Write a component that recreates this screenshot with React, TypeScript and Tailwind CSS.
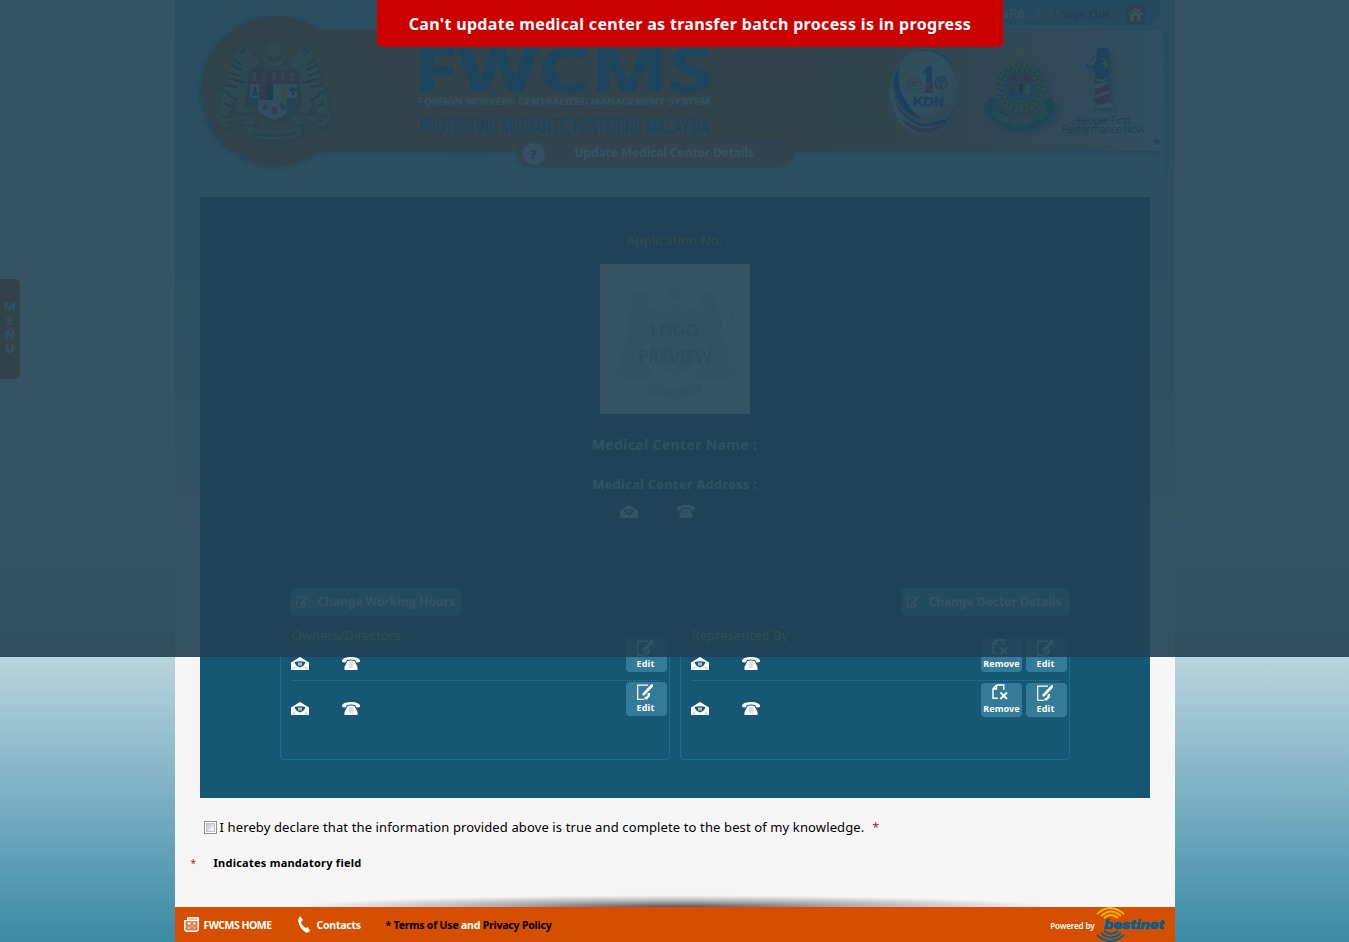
import React from "react";

function MailIcon() {
  return (
    <svg width="18" height="13" viewBox="0 0 18 13" className="block">
      <path d="M0 5.500 9 0l9 5.500V13H0z" fill="#fff" />
      <path d="M3.500 5Q9 3.500 14.500 5Q13.500 9 9 10.500Q4.500 9 3.500 5z" fill="#165873" />
      <rect x="7" y="5.500" width="4" height="3" fill="#a9c4d1" />
      <path d="M1 12.500 4.500 9.800M17 12.500 13.500 9.800" stroke="#8fb3c4" strokeWidth=".8" />
    </svg>
  );
}

function PhoneIcon() {
  return (
    <svg width="18" height="13" viewBox="0 0 18 13" className="block">
      <path d="M0 3.500Q1 0 9 0T18 3.500V5l-3.500.5L13 3Q9 2 5 3L3.500 5.500 0 5z" fill="#fff" />
      <path d="M5.500 4q3.500-1 7 0l3 6V13h-13v-3z" fill="#fff" />
      <path d="M6.500 6h5M6.500 8h5M6.500 10h5M8 5.500v5M10 5.500v5" stroke="#a9c4d1" strokeWidth=".6" />
    </svg>
  );
}

function EditIcon({ size = 16 }: { size?: number }) {
  return (
    <svg width={size} height={size} viewBox="0 0 16 16" className="block">
      <path d="M11 1.100H.7v14.200H7" stroke="#fff" strokeWidth="1.200" fill="none" />
      <path d="M16 0v2.500L9.900 9 7.300 11.500H5.500V9.500L14 .5z" fill="#fff" />
      <path d="M11 9h2v3.300L9.500 15.700 7.500 15V13l2.500-.5z" fill="#fff" />
    </svg>
  );
}

function RemoveIcon() {
  return (
    <svg width="16" height="16" viewBox="0 0 16 16" className="block">
      <path d="M4.500 1h7.300v5M4.500 1 1 4.800v9.500H6M4.500 1v4H1" stroke="#fff" strokeWidth="1.400" fill="none" />
      <path d="m8.500 8.500 6.500 6.500m0-6.500-6.500 6.500" stroke="#fff" strokeWidth="2" />
    </svg>
  );
}

function Tiger() {
  return (
    <g>
      <path d="M-20-32Q-25-45-34-43Q-41-39-38-29Q-48-20-46-6Q-55 3-53 14Q-55 22-58 26L-45 25Q-42 14-37 7L-38 14Q-38 21-31 24L-23 20-29 15-29 6Q-24-4-27-17L-17-24-14-30-20-33-28-26z" fill="#b8a054" />
      <path d="m-40-30 8 5m-11 0 10 5m-13 2 12 4m-13 2 13 3m-15 4 13 2m-16 4 9 3M-35-40l4 4m-1-7 3 5m-17 43 9 5m-13 3 8 4m4-26 10 2" stroke="#302b20" strokeWidth="2" />
      <path d="M-50 3Q-60 0-57-11Q-53-19-57-26" fill="none" stroke="#8b6740" strokeWidth="3" strokeDasharray="3 1" />
    </g>
  );
}

function Crest() {
  return (
    <g>
      <path d="M-12-38Q-11-24 0-24T12-38Q8-28 0-28T-12-38" fill="#c1a51b" />
      <path d="m0-48 2 6 5-4-1 6 6-1-4 5 5 3-6 2 2 5-6-2-3 5-3-5-6 2 2-5-6-2 5-3-4-5 6 1-1-6 5 4z" fill="#c7ad1b" transform="translate(0 -15) scale(.7)" />
      <Tiger />
      <g transform="scale(-1 1)"><Tiger /></g>
      <path d="M-24-20H23V5Q21 23 0 30Q-21 23-24 5z" fill="#ddd" />
      <path d="M-24-20H23V-6H-24z" fill="#b32035" />
      <path d="M-19-17v8m9-8v8m10-8v8m9-8v8m9-8v8" stroke="#b9a51b" strokeWidth="3" strokeDasharray="4 1" />
      <path d="M-15-6h7V10h-7z" fill="#a82032" /><path d="M-8-6h7V10h-7z" fill="#191919" />
      <path d="M7-6h7V10H7z" fill="#d8c331" />
      <path d="M14 8h9Q21 21 12 25V10z" fill="#23795c" />
      <path d="M-19-3v7m-3 0h6M19-3v8m-4-5h8" stroke="#254b30" strokeWidth="3" />
      <path d="M-24 8h8v12q-7-4-8-12" fill="#296792" />
      <path d="m-12 19h6l-3-5zM8 12l4 5-3 4-4-6zM-3 17h6v7h-4z" fill="#9d2849" />
      <path d="m-60 24 14 5 16-4 12 2-3 8-17-2-13 4zM60 24l-14 5-16-4-12 2 3 8 17-2 13 4zM-27 36Q0 45 27 36V46Q0 53-27 46z" fill="#a69a2f" />
      <path d="M-49 32q9 1 22-2M29 30q12 3 20 1M-22 43q22 5 44 0" stroke="#514b18" strokeWidth="3" strokeDasharray="2 1" fill="none" />
    </g>
  );
}

function CrestWatermark() {
  return (
    <svg className="absolute inset-0" width="150" height="150" viewBox="-75 -75 150 150">
      <g fill="#e2e7e9">
        <circle cx="0" cy="-46" r="7" />
        <path d="M-13-43Q-12-28 0-28T13-43Q9-33 0-33T-13-43" />
        {[1, -1].map((side) => (
          <g key={side} transform={`scale(${side} 1)`}>
            <path d="M-26-43-34-50-42-44-41-34Q-50-20-46-3-56 10-53 26L-62 30-50 44-38 39-20 40-25 28-32 20-31 8-22-4V-20L-10-25-20-32-29-27z" />
            <path d="M-52 3Q-66 0-60-14-53-22-60-32" fill="none" stroke="#e2e7e9" strokeWidth="2" />
          </g>
        ))}
        <path d="M-26-25H26V8Q22 30 0 36-22 30-26 8zM-27 44Q0 52 27 44V55Q0 63-27 55z" />
      </g>
    </svg>
  );
}

function BannerArt() {
  return (
    <svg width="1000" height="197" viewBox="175 0 1000 197" className="absolute inset-0">
      <defs>
        <linearGradient id="bar"><stop offset="0" stopColor="#cf6800" /><stop offset=".58" stopColor="#cf6800" /><stop offset=".78" stopColor="#cc8058" /><stop offset=".92" stopColor="#c8a8a4" /><stop offset="1" stopColor="#ccdce8" /></linearGradient>
        <linearGradient id="oval" x1="0" y1="0" x2="1" y2="1"><stop offset="0" stopColor="#b9ae65" /><stop offset=".5" stopColor="#bfd8d6" /><stop offset="1" stopColor="#b7693f" /></linearGradient>
        <filter id="shade" colorInterpolationFilters="sRGB"><feDropShadow dx="-2" dy="1" stdDeviation="2.500" floodColor="#003d72" floodOpacity=".6" /></filter>
        <filter id="soft" colorInterpolationFilters="sRGB"><feDropShadow dx="3" dy="3" stdDeviation="3" floodColor="#003050" floodOpacity=".6" /></filter>
      </defs>
      <path d="M1000 0h160v13q0 12-12 12H1000z" fill="#4f9fb8" />
      <path d="M1165 30q2 5 2 18v125" stroke="#5a9fb4" strokeWidth="3" fill="none" opacity=".5" />
      <g filter="url(#shade)"><circle cx="277" cy="91" r="75" fill="#cf6800" /><path d="M280 30H1162V151H280z" fill="url(#bar)" /></g>
      <g transform="translate(274 90)" opacity=".9" filter="url(#soft)"><Crest /></g>
      <g fill="#0e6aac">
        <text x="413" y="92" stroke="#0e6aac" strokeWidth="1" fontFamily="Open Sans, sans-serif" fontSize="61" fontWeight="700" textLength="300" lengthAdjust="spacingAndGlyphs">FWCMS</text>
        <text x="419" y="134" fontFamily="Roboto, sans-serif" fontSize="22" fontWeight="700" textLength="290" lengthAdjust="spacingAndGlyphs">PROTECTING MIGRANTS, FOSTERING MALAYSIA</text>
      </g>
      <text x="418" y="105" fill="#c8e6f2" fontFamily="Inter, sans-serif" fontSize="9" fontWeight="600" textLength="292" lengthAdjust="spacingAndGlyphs">FOREIGN WORKERS CENTRALIZED MANAGEMENT SYSTEM</text>

      <ellipse cx="924" cy="92" rx="34" ry="43" fill="url(#oval)" stroke="#6caaba" />
      <path d="M915 51Q949 43 957 80 962 110 940 128 967 99 954 70 943 48 915 51" fill="#1d5d77" />
      <path d="M901 62Q887 84 899 110Q921 139 951 118Q924 128 909 106Q893 83 901 62" fill="#0838c9" />
      <path d="M895 72Q890 97 908 113Q928 126 952 106Q926 138 902 112Q888 92 895 72" fill="#d88a3a" />
      <path d="M900 118q24 18 48 4-25 24-48-4" fill="#b02230" />
      <text x="913" y="106" fill="#093ec4" stroke="#093ec4" strokeWidth=".5" fontFamily="Liberation Sans, sans-serif" fontSize="13.500" fontWeight="900" textLength="31" lengthAdjust="spacingAndGlyphs">KDN</text>
      <path d="m922 73 6-7h4v17h-6V73z" fill="#173ab2" /><path d="m925 85 8-3v11h-9v-3h2z" fill="#ba2639" />
      <circle cx="941" cy="83" r="6" fill="#c79a3a" stroke="#1d50b2" strokeWidth="1.500" /><path d="m938 80 3 3 3-3m-3 3v5" stroke="#1d50b2" strokeWidth="1.500" fill="none" />
      <g transform="translate(915 84) scale(.14)"><Crest /></g>

      <g filter="url(#soft)">
        <path d="m984 107 6-10 8 1-1 9 20 13 11 1 19-13-4-8 8-3 5 8-8 15q-22 16-45 7l-18-14z" fill="#00775e" />
        <circle cx="1020" cy="88" r="20" fill="none" stroke="#33663d" strokeWidth="10" />
        <circle cx="1020" cy="88" r="23" fill="none" stroke="#aca51a" strokeWidth="4" strokeDasharray="3.500 2" />
        <circle cx="1020" cy="88" r="18" fill="none" stroke="#a9a21a" strokeWidth="4" strokeDasharray="3 2" />
      </g>
      <circle cx="1020" cy="87" r="15" fill="#39839a" />
      <path d="M1006 82q2-9 14-9t14 9z" fill="#b91e3c" /><path d="M1009 83h6v12h-6z" fill="#b91e3c" /><path d="M1019 84h4v9h-4z" fill="#151515" /><path d="M1025 84h5v10h-5z" fill="#d1bf20" />
      <circle cx="1020" cy="52" r="4" fill="#cbb91f" /><path d="M1012 51q1 12 8 12t8-12q-3 7-8 7t-8-7" fill="#aaa61e" />
      <path id="ribbon" d="M991 114Q1020 138 1051 112" fill="none" />
      <text fill="#c4bb2a" fontFamily="Liberation Sans, sans-serif" fontWeight="700" fontSize="8.500"><textPath href="#ribbon" textLength="63" lengthAdjust="spacingAndGlyphs">IMIGRESEN MALAYSIA</textPath></text>

      <g filter="url(#soft)">
        <path d="M1086 63q9-3 12-15h11v34l-14 3V68h-9z" fill="#054fa5" />
        <path d="m1095 85 14-4v22l6 5h-26l6-9z" fill="#d0d5da" />
        <path d="m1095 89 14-6v7l-14 6zM1094 98l15-4v8l-16 6z" fill="#b92131" />
        <path d="M1086 62q7 1 11-9-1 13-7 14zM1096 78q8 4 13-3-2 9-13 6m11-21-6-3 3 5-4 2 5 1-2 5 5-3z" fill="#d2c844" />
      </g>
      <text x="1091" y="107" fill="#dceff3" fontFamily="Liberation Serif, serif" fontStyle="italic" fontSize="6">Malaysia</text>
      <g fill="#163448" fontFamily="Noto Sans, sans-serif" fontSize="10.500">
        <text x="1076" y="124" textLength="55">People First</text><text x="1062" y="133" textLength="83">Performance Now</text>
        <text x="1153" y="149" fontSize="15">*</text>
      </g>
      <path d="M519 153q3-14 16-14H782q14 1 14 12-2 15-16 15H533q-14-1-14-13" fill="#d0662a" filter="url(#shade)" />
      <circle cx="534" cy="154" r="11" fill="#dbe9ee" />
      <text x="529.500" y="159" fill="#60465a" fontFamily="DejaVu Sans, sans-serif" fontSize="13" fontWeight="700">?</text>
      <g fill="none" stroke="#74acbf" strokeWidth="8" opacity=".2"><path d="M438 192a32 32 0 0 1 64 0M453 192a17 17 0 0 1 34 0" /></g>
    </svg>
  );
}

function Action({ kind }: { kind: "Edit" | "Remove" }) {
  return (
    <button className="flex h-[34px] w-[41px] flex-col items-center rounded-[4px] bg-[#347b9a] pt-[2px] text-[9px] leading-[11px] font-bold text-white">
      {kind === "Edit" ? <span className="-ml-[3px]"><EditIcon /></span> : <span className="-ml-[2px] -mt-px mb-px"><RemoveIcon /></span>}
      <span className={kind === "Edit" ? "mt-[2px] -ml-px tracking-[.2px]" : "mt-[2px] ml-px tracking-[.1px]"}>{kind}</span>
    </button>
  );
}

function People({ title, removable }: { title: string; removable: boolean }) {
  return (
    <section className="h-[124px] w-[390px] rounded-[4px] border border-[#167191]">
      <h2 className="-mt-[11px] ml-[7px] flex h-5 w-fit items-center bg-[#165873] px-1 text-[13px] tracking-[.06px] text-[#e0b020]">{title}</h2>
      <div className="ml-[10px] flex h-[35px] w-[376px]">
        <div className="mt-[11px] flex flex-1 gap-[33px]"><MailIcon /><PhoneIcon /></div>
        <div className="-mt-[8px] flex gap-1">{removable && <Action kind="Remove" />}<Action kind="Edit" /></div>
      </div>
      <div className="-mt-px ml-[10px] w-[369px] border-b border-dotted border-[#287a98]" />
      <div className="ml-[10px] flex w-[376px]">
        <div className="mt-[21px] flex flex-1 gap-[33px]"><MailIcon /><PhoneIcon /></div>
        <div className={removable ? "mt-[2px] flex gap-1" : "mt-px flex gap-1"}>{removable && <Action kind="Remove" />}<Action kind="Edit" /></div>
      </div>
    </section>
  );
}

function ChangeButton({ text, width }: { text: string; width: string }) {
  return <button className={`flex h-7 items-center rounded-[5px] bg-[#42a5b4] pl-[6px] text-[12px] font-bold text-white ${width}`}><EditIcon size={12} /><span className="ml-[10px] whitespace-nowrap tracking-[-.04px]">{text}</span></button>;
}

export default function App() {
  return (
    <div className="relative h-[942px] w-[1349px] overflow-hidden bg-[linear-gradient(to_bottom,#fff_0,#fff_500px,#b9d4de_658px,#3b8aa6_942px)] font-['Noto_Sans','Open_Sans',sans-serif]">
      <main className="mx-auto flex h-full w-[1000px] flex-col bg-[linear-gradient(#84c8d8_0,#a0d0da_190px,#b2dae0_300px,#d0e8f2_460px,#f6f6f6_580px)]">
        <header className="relative h-[197px]">
          <BannerArt />
          <nav className="relative flex h-7 items-center justify-end pr-[30px] text-[12px]">
            <span className="text-[13px] tracking-[.3px] text-white">aRe...!</span><span className="ml-[14px] text-[#d64e00]">[</span><span className="mx-[4px] text-[11.5px] font-medium text-[#17344a]">Sign Out</span><span className="text-[#d64e00]">]</span>
            <span className="ml-[8px] flex h-[19px] w-[19px] items-center justify-center rounded-[3px] bg-[#a04858]"><svg width="15" height="13" viewBox="0 0 15 13"><path d="M0 6 7.500 0 10 2V1h2v3l3 2-1 1-6.500-5L1 7zM2.500 7 7.500 3l5 4v6H9V8H6v5H2.500z" fill="#fff" /></svg></span>
          </nav>
          <h1 className="relative mt-[115px] pl-[400px] text-[12px] leading-5 font-bold tracking-[-.08px] text-white">Update Medical Center Details</h1>
        </header>
        <section className="mx-[25px] flex h-[601px] shrink-0 flex-col items-center bg-[#165873] text-white">
          <p className="mt-[33px] h-[34px] text-[13px] leading-5 tracking-[.15px] text-[#e0b020]">Application No.</p>
          <div className="relative flex h-[150px] w-[150px] items-center justify-center bg-white">
            <CrestWatermark />
            <p className="relative mt-2 text-center text-[18px] leading-[26px] font-medium tracking-[-.5px] text-[#a4b2b8]">LOGO<br />PREVIEW</p>
          </div>
          <p className="mt-[21px] text-[14px] leading-5 font-bold tracking-[.35px] text-[#d3e2ec]">Medical Center Name :</p>
          <p className="mt-[19px] text-[13px] leading-5 font-bold tracking-[.2px] text-[#d3e2ec]">Medical Center Address :</p>
          <div className="mt-[11px] mr-[35px] flex gap-[39px]"><MailIcon /><PhoneIcon /></div>
          <div className="mt-[70px] ml-[10px] flex w-[780px] justify-between">
            <ChangeButton text="Change Working Hours" width="w-[171px]" />
            <ChangeButton text="Change Doctor Details" width="w-[169px]" />
          </div>
          <div className="mt-[20px] flex gap-[10px]"><People title="Owners/Directors" removable={false} /><People title="Represented By" removable={true} /></div>
        </section>
        <label className="ml-[29px] mt-[20px] flex h-5 items-center whitespace-nowrap text-[13px] text-black">
          <span className="-mt-px mr-[3px] flex h-[13px] w-[13px] items-center justify-center border border-[#8e8f8f] bg-white"><span className="h-[9px] w-[9px] border border-[#bec3c8] bg-gradient-to-br from-[#bfc5ca] to-white" /></span>
          <span className="tracking-[.123px]">I hereby declare that the information provided above is true and complete to the best of my knowledge.</span><span className="ml-[8px] text-[12px] text-red-600">*</span>
        </label>
        <p className="ml-[16px] mt-[15px] flex h-5 items-center text-[11px] font-bold tracking-[.25px] text-black"><span className="w-[23px] text-[10px] font-normal text-red-600">*</span>Indicates mandatory field</p>
        <div className="mt-auto h-[13px] bg-[radial-gradient(ellipse_38%_90%_at_50%_100%,#555_0,#aaa_45%,transparent_100%)]" />
        <footer className="flex h-[35px] shrink-0 items-center bg-[#d64e00] pl-[9px] pr-[10px] text-[10.5px] font-bold text-white">
          <svg width="15" height="15" viewBox="0 0 15 15"><path d="M3 0h12v13l-2 2H2l-2-2V3h3z" fill="#fff" /><path d="M4 2h9M2 4v9h11V4M3 5h4v3H3zm6 0h3v3H9zm-6 5h4v2H3zm6 0h3v2H9z" stroke="#d64e00" strokeWidth=".7" fill="#e4a17e" /></svg>
          <span className="mt-[2px] ml-[5px] w-[68px] whitespace-nowrap tracking-[-.5px]">FWCMS HOME</span>
          <svg className="ml-[26px]" width="12" height="17" viewBox="0 0 12 17"><path d="m2 0 3 4-2 2q1 4 5 6l2-1 2 4-3 2Q1 13 0 4z" fill="#fff" /></svg>
          <span className="mt-[2px] ml-[7px] w-[44px] tracking-[-.25px]">Contacts</span>
          <span className="mt-[2px] ml-[25px] whitespace-nowrap tracking-[-.2px] text-black">* Terms of Use <span className="text-white">and</span> Privacy Policy</span>
          <span className="mt-[3px] ml-auto mr-px text-[8px] font-semibold tracking-[-.1px]">Powered by</span>
          <svg width="69" height="35" viewBox="0 0 69 35">
            <g fill="none" stroke="#ffb400" strokeWidth="1.700"><path d="M1 7Q14-5 28 7" /><path d="M5 9q10-9 20 0" /><path d="M8 11q7-6 14 0" /></g>
            <g fill="none" stroke="#075f8d" strokeWidth="2"><path d="M1 28q13 12 27 0" /><path d="M5 26q10 9 20 0" /><path d="M8 24q7 6 14 0" /></g>
            <text x="8" y="21.500" fill="#075f8d" stroke="#075f8d" strokeWidth=".5" fontFamily="Roboto, sans-serif" fontSize="13" fontStyle="italic" fontWeight="900" textLength="60" lengthAdjust="spacingAndGlyphs">bestinet</text>
            <path d="M28 25h40" stroke="#956047" strokeWidth="1" strokeDasharray="2 1.500" />
          </svg>
        </footer>
      </main>
      <aside className="absolute left-0 top-[279px] flex h-[100px] w-5 flex-col items-center rounded-r-[5px] bg-[#cf6000] pt-[20px] text-[13px] leading-[14px] font-bold text-[#c4eaff]"><span>M</span><span>E</span><span>N</span><span>U</span></aside>
      <div className="absolute inset-x-0 top-0 h-[657px] bg-[#204053]/90" />
      <div role="alert" className="absolute left-[377px] top-0 flex h-[47px] w-[626px] items-center justify-center rounded-b-[5px] bg-[#cc0000] text-[16px] font-bold tracking-[.33px] whitespace-nowrap text-white">Can't update medical center as transfer batch process is in progress</div>
    </div>
  );
}
